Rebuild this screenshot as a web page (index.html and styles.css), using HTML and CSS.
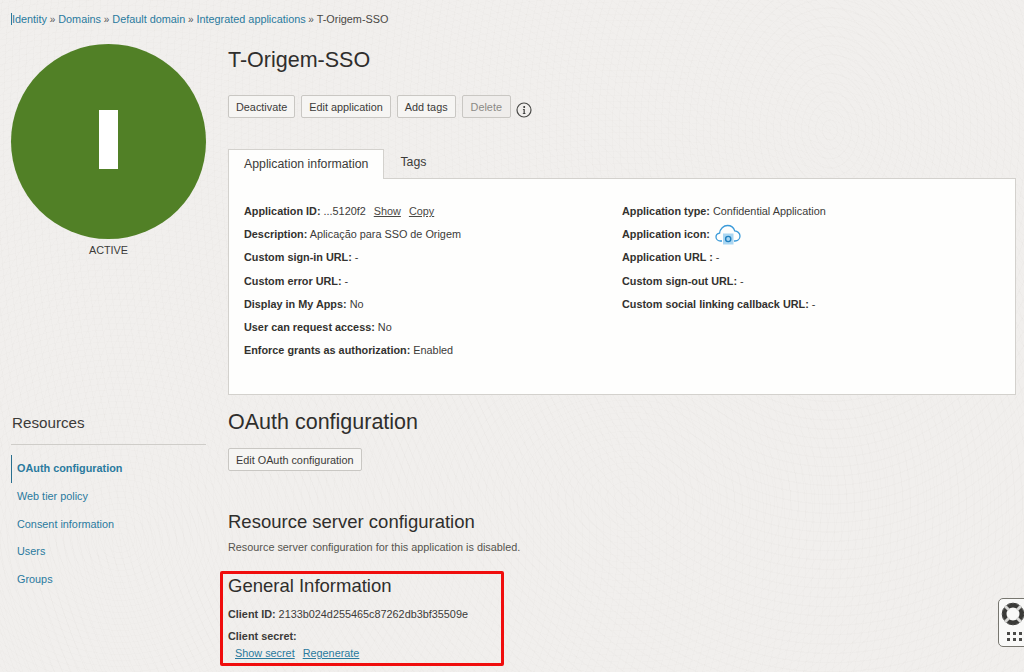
FILE: index.html
```html
<!DOCTYPE html>
<html lang="en">
<head>
<meta charset="utf-8">
<title>T-Origem-SSO</title>
<link rel="stylesheet" href="styles.css">
</head>
<body>
<div class="page">
  <nav class="crumbs">
    <a href="#">Identity</a><span class="sep">»</span>
    <a href="#">Domains</a><span class="sep">»</span>
    <a href="#">Default domain</a><span class="sep">»</span>
    <a href="#">Integrated applications</a><span class="sep">»</span>
    <span class="crumb-current">T-Origem-SSO</span>
  </nav>
  <div class="columns">
    <aside class="side">
      <div class="avatar"><span class="avatar-bar"></span></div>
      <div class="status">ACTIVE</div>
      <h3 class="res-title">Resources</h3>
      <ul class="res-list">
        <li class="res-item res-active"><a href="#">OAuth configuration</a></li>
        <li class="res-item"><a href="#">Web tier policy</a></li>
        <li class="res-item"><a href="#">Consent information</a></li>
        <li class="res-item"><a href="#">Users</a></li>
        <li class="res-item"><a href="#">Groups</a></li>
      </ul>
    </aside>
    <main class="main">
      <h1 class="title">T-Origem-SSO</h1>
      <div class="actions">
        <button class="btn">Deactivate</button>
        <button class="btn">Edit application</button>
        <button class="btn">Add tags</button>
        <button class="btn btn-off">Delete</button>
        <svg class="info" width="16" height="16" viewBox="0 0 16 16" aria-hidden="true">
          <circle cx="8" cy="8" r="7" fill="none" stroke="#4a4a48" stroke-width="1.2"/>
          <circle cx="8.2" cy="4.9" r="1" fill="#2f2f2d"/>
          <path d="M6.9 7h1.8v4.2h.8v.8H6.8v-.8h.8V7.8h-.7z" fill="#2f2f2d"/>
        </svg>
      </div>
      <div class="tabs">
        <div class="tab tab-on">Application information</div>
        <div class="tab">Tags</div>
      </div>
      <section class="panel">
        <div class="panel-col">
          <p class="row"><b>Application ID:</b> ...5120f2 <a class="plain" href="#">Show</a> <a class="plain" href="#">Copy</a></p>
          <p class="row"><b>Description:</b> Aplicação para SSO de Origem</p>
          <p class="row"><b>Custom sign-in URL:</b> -</p>
          <p class="row"><b>Custom error URL:</b> -</p>
          <p class="row"><b>Display in My Apps:</b> No</p>
          <p class="row"><b>User can request access:</b> No</p>
          <p class="row"><b>Enforce grants as authorization:</b> Enabled</p>
        </div>
        <div class="panel-col">
          <p class="row"><b>Application type:</b> Confidential Application</p>
          <p class="row"><b>Application icon:</b>
            <svg class="cloud" width="26" height="22" viewBox="0 0 26 22" aria-hidden="true">
              <path d="M7 17H5.500C3 17 1 15.200 1 13c0-2 1.600-3.600 3.600-3.900C5 5 8.500 1.500 12.500 1.500c3.500 0 6.300 2.300 7.200 5.400 2.900.2 5.300 2.500 5.300 5.100 0 2.800-2.200 5-5 5h-1" fill="none" stroke="#3a9ad9" stroke-width="1.300"/>
              <rect x="8" y="9.500" width="10.500" height="11" fill="#a9d6f2"/>
              <circle cx="13.200" cy="15" r="2.600" fill="none" stroke="#1f7fbf" stroke-width="1.400"/>
            </svg>
          </p>
          <p class="row"><b>Application URL :</b> -</p>
          <p class="row"><b>Custom sign-out URL:</b> -</p>
          <p class="row"><b>Custom social linking callback URL:</b> -</p>
        </div>
      </section>
      <h2 class="h-big">OAuth configuration</h2>
      <button class="btn">Edit OAuth configuration</button>
      <h2 class="h-mid">Resource server configuration</h2>
      <p class="note">Resource server configuration for this application is disabled.</p>
      <section class="general">
        <h2 class="h-gen">General Information</h2>
        <p class="g-row g-id"><b>Client ID:</b> 2133b024d255465c87262db3bf35509e</p>
        <p class="g-row g-secret"><b>Client secret:</b></p>
        <p class="g-links"><a href="#">Show secret</a><a href="#">Regenerate</a></p>
      </section>
    </main>
  </div>
</div>
<div class="help">
  <svg width="30" height="46" viewBox="0 0 30 46" aria-hidden="true">
    <circle cx="14" cy="14" r="8.500" fill="none" stroke="#3a3a38" stroke-width="4"/>
    <circle cx="14" cy="14" r="10.800" fill="none" stroke="#3a3a38" stroke-width="1"/>
    <g stroke="#d8d8d6" stroke-width="3"><path d="M6 6l4 4M22 6l-4 4M6 22l4-4M22 22l-4-4"/></g>
    <g fill="#4a4a48">
      <rect x="8" y="32" width="3" height="3"/><rect x="14" y="32" width="3" height="3"/><rect x="20" y="32" width="3" height="3"/>
      <rect x="8" y="38" width="3" height="3"/><rect x="14" y="38" width="3" height="3"/><rect x="20" y="38" width="3" height="3"/>
    </g>
  </svg>
</div>
</body>
</html>
```
FILE: styles.css
```css
* { box-sizing: border-box; }
html, body { margin: 0; height: 100%; }
body {
  position: relative;
  height: 672px;
  overflow: hidden;
  background-color: #f1efed;
  background-image:
    repeating-radial-gradient(ellipse 60px 80px at 830px 130px, rgba(120,110,100,.018) 0 1px, transparent 1px 7px),
    repeating-radial-gradient(ellipse 90px 70px at 630px 500px, rgba(120,110,100,.015) 0 1px, transparent 1px 8px),
    repeating-radial-gradient(ellipse 70px 60px at 120px 540px, rgba(120,110,100,.015) 0 1px, transparent 1px 7px);
  font-family: "Liberation Sans", Arial, sans-serif;
  font-size: 10.850px;
  color: #3c3b39;
}
a { color: #2a7a9e; text-decoration: none; }
.page { position: relative; padding: 13px 8px 0 11px; }
.crumbs { height: 13px; line-height: 13px; white-space: nowrap; }
.crumbs a:first-child { border-left: 1px solid #2a7a9e; }
.sep { margin-left: 2.700px; color: #555; font-size: 10px; }
.crumb-current { color: #4a4945; }
.columns { display: flex; gap: 22px; margin-top: 18px; }
.side { width: 195px; flex: none; }
.avatar {
  width: 195px; height: 195px; border-radius: 50%;
  background: #518026;
  display: flex; align-items: center; justify-content: center;
}
.avatar-bar { width: 19px; height: 59px; margin-bottom: 4px; background: #fff; }
.status { text-align: center; margin-top: 4px; line-height: 14px; color: #3c3b39; }
.res-title { margin: 156px 0 0; padding: 0 0 11px 1px; font-size: 15.200px; font-weight: 400; line-height: 20px; color: #3c3b39; border-bottom: 1px solid #cfcdc9; }
.res-list { list-style: none; margin: 10px 0 0; padding: 0; }
.res-item { height: 27.800px; line-height: 27.800px; padding-left: 5px; border-left: 1px solid transparent; }
.res-active { border-left-color: #2a6f8f; font-weight: 700; }
.main { flex: 1; min-width: 0; }
.title { margin: 1px 0 0; font-size: 21.500px; font-weight: 400; line-height: 30px; color: #2f2e2c; }
.actions { display: flex; gap: 6px; align-items: center; margin-top: 20px; }
.btn {
  height: 23px; padding: 0 7px; font: inherit; color: #3c3b39;
  background: #f6f5f3; border: 1px solid #c9c7c3; border-radius: 2px;
}
.btn-off { padding: 0 8px; color: #8b8a86; background: #efedeb; }
.info { margin: 7px 0 0 -1px; }
.tabs { display: flex; margin-top: 31px; height: 29px; }
.tab { padding: 0 15px; line-height: 27px; font-size: 12.300px; color: #3c3b39; }
.tab-on { background: #fefefd; border: 1px solid #d3d1cd; border-bottom: 0; margin-bottom: -1px; height: 30px; line-height: 29px; position: relative; z-index: 1; }
.tab:not(.tab-on) { padding-left: 16px; }
.panel {
  display: grid; grid-template-columns: 378px 1fr;
  height: 217px; padding: 25px 15px 0;
  background: #fefefd; border: 1px solid #d3d1cd;
}
.row { margin: 0 0 9.200px; line-height: 14px; white-space: nowrap; }
.row b { color: #33322f; }
.plain { color: #4a4945; text-decoration: underline; margin-left: 5px; }
.cloud { vertical-align: middle; margin: -6px 0 -6px 2px; }
.h-big { margin: 14px 0 0; font-size: 21.500px; font-weight: 400; line-height: 26px; color: #2f2e2c; }
.main > .btn { display: block; margin-top: 13px; }
.h-mid { margin: 39px 0 0; font-size: 18.500px; font-weight: 400; line-height: 24px; color: #2f2e2c; }
.note { margin: 6px 0 0; line-height: 14px; color: #55544f; }
.general {
  width: 284px; height: 95px; margin: 17px 0 0 -8px; padding: 1px 0 0 5px;
  border: 3px solid #f00d0d; border-radius: 2px;
}
.h-gen { margin: 0; font-size: 18.500px; font-weight: 400; line-height: 22px; color: #2f2e2c; }
.g-row { line-height: 14px; }
.g-id { margin: 10px 0 0; }
.g-secret { margin: 8px 0 0; }
.g-links { margin: 3px 0 0 7px; line-height: 14px; }
.g-links a { text-decoration: underline; margin-right: 8px; }
.help {
  position: absolute; left: 998px; top: 598px; width: 40px; height: 49px;
  background: #f9f9f8; border: 1px solid #77766f; border-radius: 5px;
  padding: 1px 0 0 0;
}
```
